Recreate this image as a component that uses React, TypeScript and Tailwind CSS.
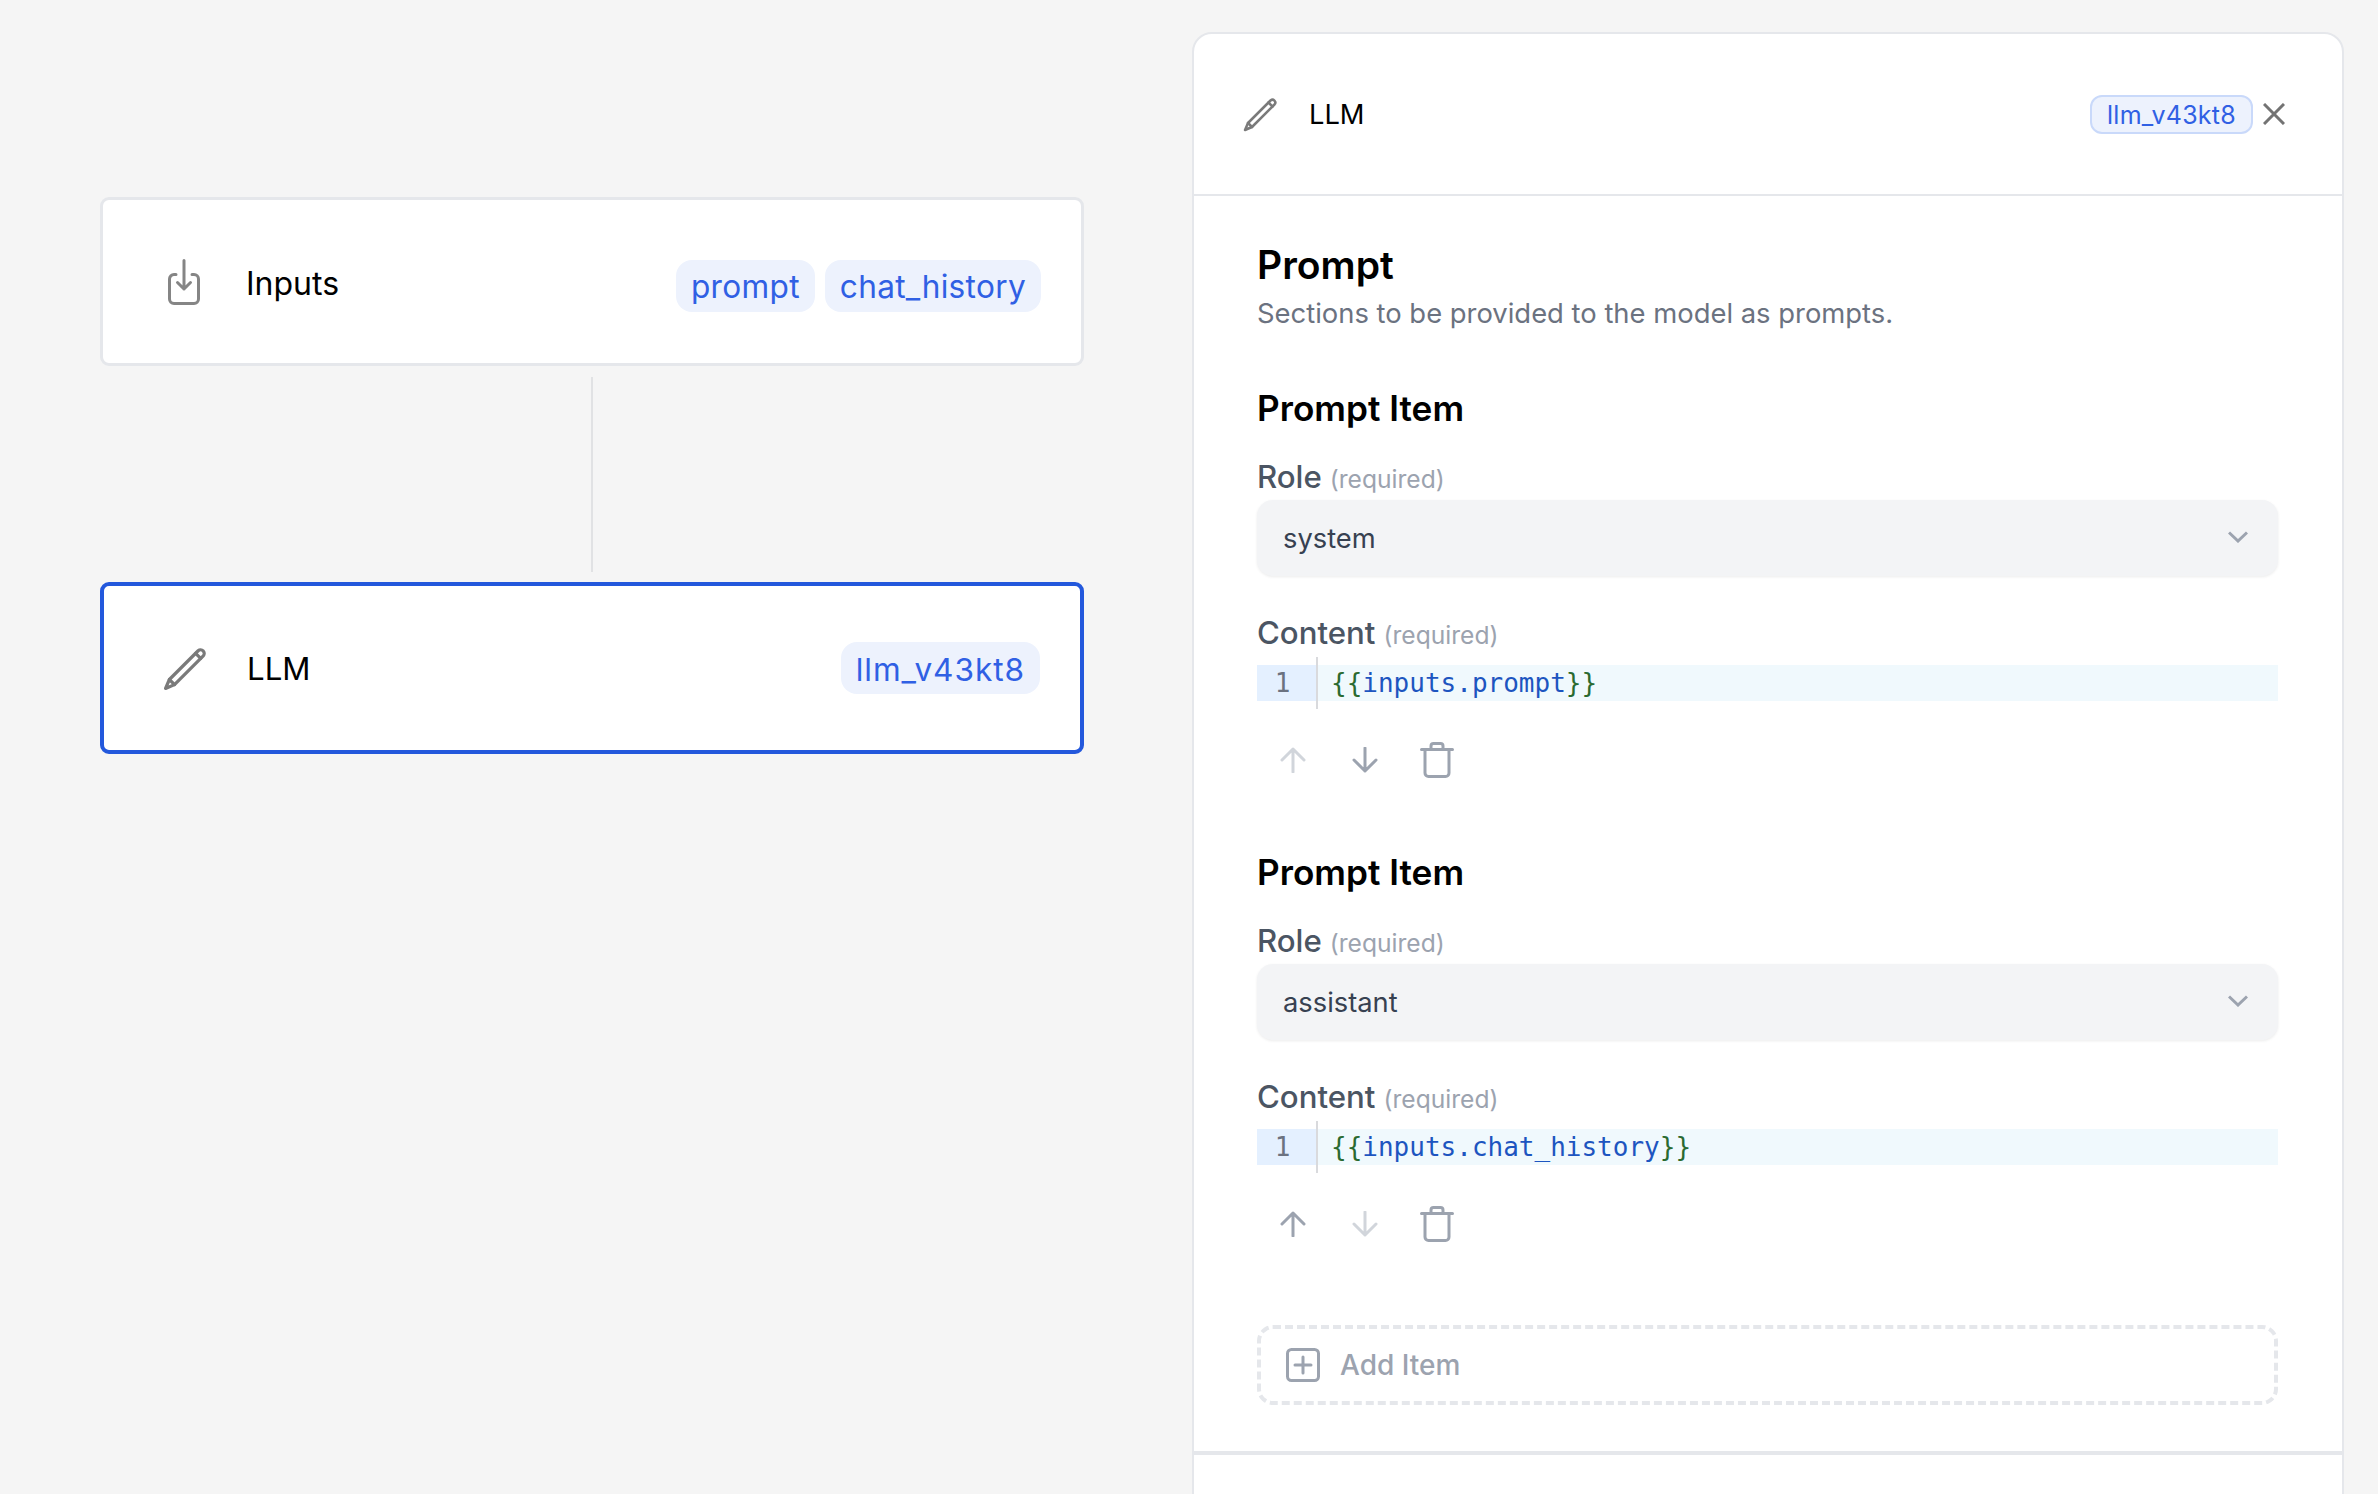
import type { ReactNode } from "react";

const ui = "font-['Inter',sans-serif]";

function Chip({ children, wide }: { children: ReactNode; wide?: boolean }) {
  return (
    <span
      className={
        wide
          ? "flex h-[52px] items-center rounded-[16px] bg-[#edf2fd] px-[15px] pt-[3px] text-[31.6px] leading-none tracking-[0.03em] text-[#3060e4]"
          : "flex h-[52px] items-center rounded-[16px] bg-[#edf2fd] px-[15px] pt-[3px] text-[31.6px] leading-none tracking-[0.01em] text-[#3060e4]"
      }
    >
      {children}
    </span>
  );
}

function PencilIcon({ className }: { className: string }) {
  return (
    <svg viewBox="0 0 36 36" fill="none" stroke="#7a7a7a" strokeWidth="2.500" strokeLinejoin="round" strokeLinecap="round" className={className}>
      <path d="M2 34L5 27L27.500 4.500A2.830 2.830 0 0 1 31.500 8.500L9 31Z" />
      <path d="M25.500 6.500l4 4M5 27l4 4" />
    </svg>
  );
}

function InputIcon() {
  return (
    <svg viewBox="0 0 32 46" fill="none" stroke="#858585" strokeWidth="3" strokeLinecap="round" strokeLinejoin="round" className="h-[46px] w-8">
      <path d="M8 15.500H6A4.500 4.500 0 0 0 1.500 20v20A4.500 4.500 0 0 0 6 44.500h20a4.500 4.500 0 0 0 4.500-4.500V20A4.500 4.500 0 0 0 26 15.500H24" />
      <path d="M16 1.500V30M9.500 23.500L16 30l6.500-6.500" />
    </svg>
  );
}

function FlowNode({ icon, label, chips, selected, labelClass, chipClass }: { icon: ReactNode; label: string; chips: string[]; selected?: boolean; labelClass: string; chipClass: string }) {
  return (
    <div
      className={
        selected
          ? "flex h-[172px] items-center rounded-[9px] border-[4px] border-[#2358dc] bg-white"
          : "flex h-[169px] items-center rounded-[9px] border-[3px] border-[#e5e7eb] bg-white"
      }
    >
      {icon}
      <span className={labelClass}>{label}</span>
      <div className={chipClass}>
        {chips.map((c) => (
          <Chip key={c} wide={selected}>
            {c}
          </Chip>
        ))}
      </div>
    </div>
  );
}

function Label({ name }: { name: string }) {
  return (
    <div className="flex h-[40px] items-center gap-[8px]">
      <span className="text-[31.2px] leading-none font-medium text-[#4b5563]">{name}</span>
      <span className="mt-[3px] text-[24.600px] leading-none text-[#9ca3af]">(required)</span>
    </div>
  );
}

function ArrowUp({ className }: { className: string }) {
  return (
    <svg viewBox="0 0 26 26" fill="none" stroke="currentColor" strokeWidth="3" strokeLinecap="round" strokeLinejoin="round" className={className}>
      <path d="M13 25V2M2 13L13 2l11 11" />
    </svg>
  );
}

function ArrowDown({ className }: { className: string }) {
  return (
    <svg viewBox="0 0 26 26" fill="none" stroke="currentColor" strokeWidth="3" strokeLinecap="round" strokeLinejoin="round" className={className}>
      <path d="M13 1v23M2 13l11 11 11-11" />
    </svg>
  );
}

function TrashIcon() {
  return (
    <svg viewBox="0 0 34 36" fill="none" stroke="#9ca3af" strokeWidth="3" strokeLinecap="round" strokeLinejoin="round" className="h-9 w-[34px]">
      <path d="M1.500 7.500h31M11 7.500V4a2.500 2.500 0 0 1 2.500-2.500h7A2.500 2.500 0 0 1 23 4v3.500" />
      <path d="M5 7.500V31a3.500 3.500 0 0 0 3.500 3.500h17A3.500 3.500 0 0 0 29 31V7.500" />
    </svg>
  );
}

function PromptItem({ role, expr, upDisabled, downDisabled }: { role: string; expr: string; upDisabled?: boolean; downDisabled?: boolean }) {
  return (
    <section className="h-[464px]">
      <h3 className="flex h-[44px] items-center text-[35.200px] leading-none font-semibold text-black">Prompt Item</h3>
      <div className="mt-[27px]">
        <Label name="Role" />
      </div>
      <div className="mt-[2px] flex h-[76px] items-center justify-between rounded-[16px] bg-[#f3f4f6] pr-[30px] pl-[26px] text-[27.300px] text-[#374151] shadow-[0_1px_3px_rgba(0,0,0,0.08)]">
        <span className="pt-[2px]">{role}</span>
        <svg viewBox="0 0 20 12" fill="none" stroke="#9ca3af" strokeWidth="3" className="-mt-[2px] h-3 w-5">
          <path d="M1 1.500l9 8.500 9-8.500" />
        </svg>
      </div>
      <div className="mt-[38px]">
        <Label name="Content" />
      </div>
      <div className="mt-[3px] flex h-[52px] items-center">
        <div className="flex h-[36px] w-[59px] items-center justify-center bg-[#e4f0ff] pr-2 font-['DejaVu_Sans_Mono',monospace] text-[26px] leading-none text-[#6b7280]">
          1
        </div>
        <div className="flex h-full flex-1 items-center border-l-2 border-[#d9dadd]">
          <div className="flex h-[36px] flex-1 items-center bg-[#f0f9fd] pl-[13px] font-['DejaVu_Sans_Mono',monospace] text-[26px] leading-none">
            <span className="text-[#2a6a30]">{"{{"}</span>
            <span className="text-[#1d55c0]">{expr}</span>
            <span className="text-[#2a6a30]">{"}}"}</span>
          </div>
        </div>
      </div>
      <div className="mt-[33px] flex items-center gap-[46px] pl-[23px]">
        <ArrowUp className={upDisabled ? "h-[26px] w-[26px] text-[#d1d5db]" : "h-[26px] w-[26px] text-[#9ca3af]"} />
        <ArrowDown className={downDisabled ? "h-[26px] w-[26px] text-[#d1d5db]" : "h-[26px] w-[26px] text-[#9ca3af]"} />
        <div className="-ml-[4px]">
          <TrashIcon />
        </div>
      </div>
    </section>
  );
}

export default function App() {
  return (
    <div className={`${ui} flex h-screen overflow-hidden bg-[#f5f5f5]`}>
      <div className="w-[1192px] shrink-0 pt-[197px] pr-[108px] pl-[100px]">
        <FlowNode
          icon={
            <div className="ml-[65px]">
              <InputIcon />
            </div>
          }
          label="Inputs"
          labelClass="ml-[46px] pt-[4px] text-[32px] leading-none text-black"
          chipClass="mt-[8px] mr-[40px] ml-auto flex gap-[10px]"
          chips={["prompt", "chat_history"]}
        />
        <div className="mx-auto mt-[11px] h-[195px] w-[2px] bg-[#e1e2e4]" />
        <div className="mt-[10px]">
          <FlowNode
            selected
            icon={<PencilIcon className="ml-[59px] h-[46px] w-[46px]" />}
            label="LLM"
            labelClass="ml-[38px] pt-[4px] text-[31.2px] leading-none text-black"
            chipClass="mr-[40px] ml-auto flex gap-[10px]"
            chips={["llm_v43kt8"]}
          />
        </div>
      </div>

      <aside className="mt-[32px] h-[1520px] w-[1152px] shrink-0 rounded-t-[20px] border-2 border-[#e5e7eb] bg-white">
        <header className="flex h-[162px] items-center border-b-2 border-[#e5e7eb] pr-[57px] pl-[49px]">
          <PencilIcon className="h-[36px] w-[36px]" />
          <span className="ml-[30px] pt-[1px] text-[27.300px] leading-none text-black">LLM</span>
          <span className="ml-auto flex h-[39px] items-center rounded-[12px] border-2 border-[#c9d9fa] bg-[#edf2fd] px-[15px] pt-[2px] text-[25px] leading-none tracking-[0.01em] text-[#3060e4]">
            llm_v43kt8
          </span>
          <svg viewBox="0 0 22 22" fill="none" stroke="#737373" strokeWidth="3" className="ml-[10px] h-[22px] w-[22px]">
            <path d="M1 1l20 20M21 1L1 21" />
          </svg>
        </header>

        <div className="pr-[64px] pl-[63px]">
          <h2 className="mt-[46px] flex h-[44px] items-center text-[39px] leading-none font-semibold text-black">Prompt</h2>
          <p className="mt-[9px] h-[36px] text-[27.400px] leading-[36px] text-[#6b7280]">Sections to be provided to the model as prompts.</p>
          <div className="mt-[56px]">
            <PromptItem role="system" expr="inputs.prompt" upDisabled />
            <PromptItem role="assistant" expr="inputs.chat_history" downDisabled />
          </div>
          <button
            type="button"
            className="mt-[10px] flex h-[80px] w-full items-center rounded-[16px] border-[4px] border-dashed border-[#e5e7eb] pl-[25px] text-[28px] font-[550] text-[#9ca3af]"
          >
            <svg viewBox="0 0 34 34" fill="none" stroke="#9ca3af" strokeWidth="3" strokeLinecap="round" className="h-[34px] w-[34px]">
              <rect x="1.500" y="1.500" width="31" height="31" rx="4" />
              <path d="M17 9v16M9 17h16" />
            </svg>
            <span className="ml-[20px]">Add Item</span>
          </button>
        </div>
        <div className="mt-[46px] h-[4px] bg-[#e5e7eb]" />
      </aside>
    </div>
  );
}
